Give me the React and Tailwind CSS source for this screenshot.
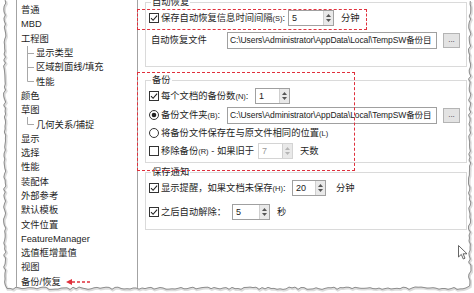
import React from "react";

// ── left tree list ───────────────────────────────────────────────
// level: 0 = top item, 1 = child with more siblings below, 2 = last child
const ITEMS = [
  ["普通", 0], ["MBD", 0], ["工程图", 0], ["显示类型", 1], ["区域剖面线/填充", 1], ["性能", 2],
  ["颜色", 0], ["草图", 0], ["几何关系/捕捉", 2], ["显示", 0], ["选择", 0], ["性能", 0],
  ["装配体", 0], ["外部参考", 0], ["默认模板", 0], ["文件位置", 0], ["FeatureManager", 0],
  ["选值框增量值", 0], ["视图", 0], ["备份/恢复", 0],
];

const Connector = ({ last }) => (
  <svg width="14" height="14.3" className="shrink-0">
    <line x1="6.5" y1="0" x2="6.5" y2={last ? 7.5 : 14.3} stroke="#a8a8a8" />
    <line x1="6.5" y1="7.5" x2="13" y2="7.5" stroke="#a8a8a8" />
  </svg>
);

const Check = ({ checked = true }) => (
  <svg width="10" height="10" viewBox="0 0 10 10" className="shrink-0">
    <rect x="0.5" y="0.5" width="9" height="9" fill="#fff" stroke="#333" />
    {checked && <path d="M2 5.1 L4.1 7.3 L8.1 2.6" fill="none" stroke="#222" strokeWidth="1.1" />}
  </svg>
);

const Radio = ({ on }) => (
  <svg width="10" height="10" viewBox="0 0 10 10" className="shrink-0">
    <circle cx="5" cy="5" r="4.5" fill="#fff" stroke="#333" />
    {on && <circle cx="5" cy="5" r="2.3" fill="#222" />}
  </svg>
);

const Sm = ({ children }) => <span className="text-[7.5px]">{children}</span>;

const Spin = ({ value, className, disabled }) => (
  <div className={`flex h-[16px] shrink-0 border bg-white ${disabled ? "border-[#d4d4d4] text-[#9a9a9a]" : "border-[#a0a0a0] text-[#222]"} ${className}`}>
    <div className="flex flex-1 items-center pl-[3px] text-[9px]">{value}</div>
    <div className="flex w-[10px] flex-col items-center justify-center gap-[2px] border-l border-[#cfcfcf] bg-[#e9e9e9]">
      <svg width="5" height="3"><path d="M0 3 L2.5 0 L5 3 Z" fill={disabled ? "#b5b5b5" : "#555"} /></svg>
      <svg width="5" height="3"><path d="M0 0 L2.5 3 L5 0 Z" fill={disabled ? "#b5b5b5" : "#555"} /></svg>
    </div>
  </div>
);

const PathBox = () => (
  <>
    <div className="flex h-[17px] w-[210px] shrink-0 items-center overflow-hidden border border-[#a0a0a0] bg-white pl-[2px] text-[#222]">
      <span className="whitespace-nowrap text-[8.5px] tracking-[-0.1px]">C:\Users\Administrator\AppData\Local\TempSW备份目</span>
    </div>
    <div className="ml-[6px] flex h-[15px] w-[17px] shrink-0 items-center justify-center border border-[#b4b4b4] bg-[#e3e3e3] text-[8px] leading-[8px] text-[#333]">
      ...
    </div>
  </>
);

function TornEdge() {
  const pts = [];
  let s = 11;
  const rnd = () => {
    s = (s * 9301 + 49297) % 233280;
    return s / 233280;
  };
  for (let y = 0; y <= 286; y += 3) pts.push([3.5 + rnd() * 2.5, y]);
  for (let x = 7; x <= 467; x += 3) pts.push([x, 287 + rnd() * 2.5]);
  for (let y = 286; y >= 0; y -= 3) pts.push([468.5 + rnd() * 2.5, y]);
  const line = pts.map((p, i) => `${i ? "L" : "M"}${p[0].toFixed(1)},${p[1].toFixed(1)}`).join(" ");
  const outside = `M0,0 ${line.replace("M", "L")} L474,0 L474,293 L0,293 Z`;
  return (
    <svg className="pointer-events-none absolute inset-0" width="474" height="293">
      <path d={outside} fill="#fff" />
      <path d={line} fill="none" stroke="#dcdcdc" strokeWidth="2.5" transform="translate(0.8,1)" />
      <path d={line} fill="none" stroke="#8e8e8e" strokeWidth="1" />
    </svg>
  );
}

export default function App() {
  return (
    <div className="relative h-[293px] w-[474px] overflow-hidden bg-white font-['Liberation_Sans','Noto_Sans_CJK_SC',sans-serif] text-[9.3px] leading-[12px] text-[#1e1e1e]">
      <div className="flex h-full">
        {/* options tree */}
        <div className="ml-[16px] h-[290px] w-[122px] shrink-0 border-x border-b border-[#a3a3a3] pl-[4px] pt-[3px]">
          {ITEMS.map(([label, level], i) => (
            <div key={i} className="flex h-[14.3px] items-center whitespace-nowrap">
              {level > 0 && <Connector last={level === 2} />}
              <span className={level > 0 ? "ml-[1px]" : ""}>{label}</span>
              {label === "备份/恢复" && (
                <svg width="24" height="8" className="ml-[5px]">
                  <path d="M0 4 L6 1 L6 7 Z" fill="#e0303c" />
                  <line x1="6" y1="4" x2="24" y2="4" stroke="#e0303c" strokeWidth="1.3" strokeDasharray="3 2" />
                </svg>
              )}
            </div>
          ))}
        </div>

        {/* settings */}
        <div className="flex-1 pl-[7px]">
          <fieldset className="mt-[-4px] w-[322px] border border-[#dadada] pb-[16px] pl-[3px]">
            <legend className="ml-[2px] px-[1px] leading-[12px]">自动恢复</legend>
            <div className="flex h-[20px] items-center">
              <Check />
              <span className="ml-[2px] w-[127px] whitespace-nowrap">保存自动恢复信息时间间隔<Sm>(S)</Sm>:</span>
              <Spin value="5" className="w-[46px]" />
              <span className="ml-[7px]">分钟</span>
            </div>
            <div className="mt-[2px] flex h-[20px] items-center">
              <span className="ml-[2px] w-[76px]">自动恢复文件</span>
              <PathBox />
            </div>
          </fieldset>

          <fieldset className="mt-[7px] w-[322px] border border-[#dadada] pb-[2px] pl-[3px]">
            <legend className="ml-[2px] px-[1px] leading-[12px]">备份</legend>
            <div className="flex h-[20px] items-center">
              <Check />
              <span className="ml-[2px] w-[94px] whitespace-nowrap">每个文档的备份数<Sm>(N)</Sm>:</span>
              <Spin value="1" className="w-[35px]" />
            </div>
            <div className="flex h-[18px] items-center">
              <Radio on />
              <span className="ml-[2px] w-[66px] whitespace-nowrap">备份文件夹<Sm>(B)</Sm>:</span>
              <PathBox />
            </div>
            <div className="flex h-[18px] items-center">
              <Radio />
              <span className="ml-[2px] whitespace-nowrap">将备份文件保存在与原文件相同的位置<Sm>(L)</Sm></span>
            </div>
            <div className="flex h-[18px] items-center">
              <Check checked={false} />
              <span className="ml-[2px] w-[97px] whitespace-nowrap">移除备份<Sm>(R)</Sm> - 如果旧于</span>
              <Spin value="7" className="w-[35px]" disabled />
              <span className="ml-[7px]">天数</span>
            </div>
          </fieldset>

          <fieldset className="mt-[3px] w-[322px] border border-[#dadada] pb-[7px] pl-[3px]">
            <legend className="ml-[2px] px-[1px] leading-[12px]">保存通知</legend>
            <div className="flex h-[20px] items-center">
              <Check />
              <span className="ml-[2px] w-[131px] whitespace-nowrap">显示提醒，如果文档未保存<Sm>(H)</Sm>:</span>
              <Spin value="20" className="w-[34px]" />
              <span className="ml-[10px]">分钟</span>
            </div>
            <div className="mt-[4px] flex h-[20px] items-center">
              <Check />
              <span className="ml-[2px] w-[71px] whitespace-nowrap">之后自动解除：</span>
              <Spin value="5" className="w-[38px]" />
              <span className="ml-[7px]">秒</span>
            </div>
          </fieldset>
        </div>
      </div>

      {/* red dashed annotations */}
      <div className="pointer-events-none absolute left-[137px] top-[9px] h-[21px] w-[230px] border-[1.5px] border-dashed border-[#e0303c]" />
      <div className="pointer-events-none absolute left-[137px] top-[72px] h-[99px] w-[218px] border-[1.5px] border-dashed border-[#e0303c]" />

      {/* mouse cursor */}
      <svg className="pointer-events-none absolute left-[458px] top-[245px]" width="11" height="15" viewBox="0 0 11 15">
        <path d="M0.5 0.5 L0.5 12 L3.3 9.4 L5.3 14 L7 13.2 L5.1 8.8 L9 8.8 Z" fill="#fff" stroke="#555" strokeWidth="0.9" />
      </svg>

      <TornEdge />
    </div>
  );
}
